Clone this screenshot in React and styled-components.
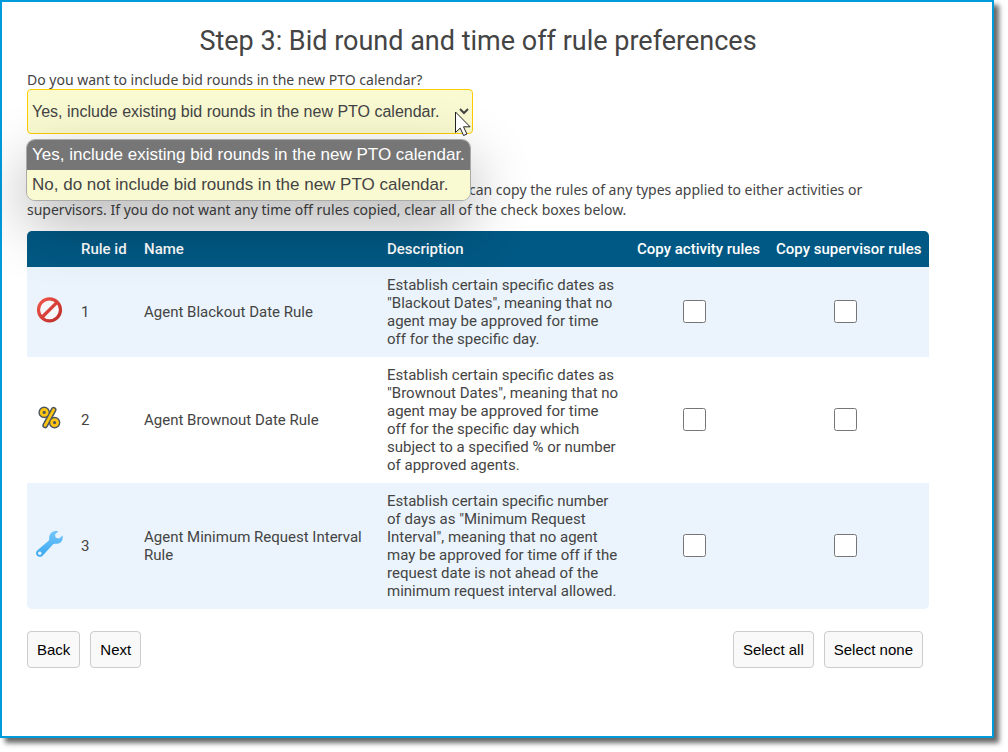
import React, { useState } from "react";
import styled, { createGlobalStyle } from "styled-components";

const GlobalStyle = createGlobalStyle`
  * {
    box-sizing: border-box;
  }

  body {
    margin: 0;
    background: #fff;
    color: #444;
    font-family: Roboto, sans-serif;
    font-size: 15px;
    line-height: 18px;
  }
`;

const Frame = styled.main`
  margin: 0 14px 14px 0;
  min-height: calc(100vh - 14px);
  padding: 21px 63px 40px 25px;
  border: 2px solid #009bdb;
  background: #fff;
  box-shadow: 5px 5px 5px 0 rgba(0, 0, 0, 0.6);
`;

const Title = styled.h1`
  margin: 0 0 11px;
  font-size: 27px;
  font-weight: 400;
  line-height: 36px;
  text-align: center;
`;

const Field = styled.div`
  position: relative;
  display: flex;
  flex-direction: column;
  align-items: flex-start;
`;

const FieldLabel = styled.label`
  font-family: "Noto Sans", sans-serif;
  font-size: 14px;
  line-height: 19px;
`;

const RoundSelect = styled.select`
  width: 446px;
  height: 45px;
  padding: 0;
  border: 1px solid #fc0;
  border-radius: 4px;
  background: #fafad2;
  color: #444;
  font-family: "Liberation Sans", sans-serif;
  font-size: 16px;
`;

const OptionList = styled.ul`
  position: absolute;
  top: 69px;
  left: -1px;
  z-index: 1;
  width: 445px;
  margin: 0;
  padding: 0;
  overflow: hidden;
  list-style: none;
  border: 1px solid #aaa;
  border-radius: 9px;
  background: #fafad2;
  box-shadow: 0 22px 60px rgba(0, 0, 0, 0.3);
`;

const OptionItem = styled.li`
  padding: 0 5px;
  font-family: "Liberation Sans", sans-serif;
  font-size: 17px;
  line-height: 30px;
  white-space: nowrap;
  background: ${(props) => (props.$active ? "#767676" : "#fafad2")};
  color: ${(props) => (props.$active ? "#fff" : "#444")};
`;

const Cursor = styled.svg`
  position: absolute;
  top: 41px;
  left: 428px;
  z-index: 2;
`;

const Hint = styled.p`
  margin: 46px 0 11px;
  font-family: "Noto Sans", sans-serif;
  font-size: 14px;
  line-height: 20px;
`;

const HintLead = styled.span`
  padding-left: 442px;
`;

const RuleTable = styled.table`
  width: 100%;
  table-layout: fixed;
  border-collapse: collapse;
  border-radius: 5px;
  overflow: hidden;
`;

const Column = styled.col`
  width: ${(props) => props.$width};
`;

const HeadCell = styled.th`
  padding: 9px;
  background: #005984;
  color: #fff;
  font-weight: 500;
  text-align: left;
  white-space: nowrap;
`;

const Row = styled.tr`
  &:nth-child(odd) {
    background: #ebf4fc;
  }
`;

const Cell = styled.td`
  padding: 9px;
`;

const IconCell = styled(Cell)`
  padding-bottom: 11px;
`;

const CheckCell = styled(Cell)`
  padding-right: 15px;
  padding-bottom: 11px;
  text-align: center;
`;

const CheckBox = styled.input`
  display: block;
  width: 23px;
  height: 23px;
  margin: 0 auto;
`;

const Icon = styled.svg`
  display: block;
  width: 28px;
  height: 28px;
`;

const Actions = styled.div`
  display: flex;
  gap: 10px;
  margin-top: 22px;
  padding-right: 6px;
`;

const Spacer = styled.div`
  flex: 1;
`;

const Button = styled.button`
  height: 37px;
  padding: 0 9px;
  border: 1px solid #ccc;
  border-radius: 4px;
  background: #f9f9f9;
  color: #000;
  font-family: "Liberation Sans", sans-serif;
  font-size: 15px;
`;

const BlackoutIcon = () => (
  <Icon viewBox="0 0 28 28" aria-hidden="true">
    <defs>
      <linearGradient id="ban" x1="0" y1="0" x2="1" y2="1">
        <stop offset="0" stopColor="#f0564a" />
        <stop offset="1" stopColor="#bd2c28" />
      </linearGradient>
    </defs>
    <circle cx="13.5" cy="12.8" r="11" fill="#f5f7f9" stroke="url(#ban)" strokeWidth="3.2" />
    <path d="M5.8 20.5 21.2 5.1" stroke="#d84039" strokeWidth="3.2" />
  </Icon>
);

const BrownoutIcon = () => (
  <Icon viewBox="0 0 28 28" fill="none" aria-hidden="true">
    <g stroke="#4b565f" strokeWidth="5.8" strokeLinecap="round">
      <circle cx="8.2" cy="7.4" r="2.9" />
      <circle cx="18.6" cy="17.6" r="2.9" />
      <path d="M17.6 4.8 9.2 20.4" />
    </g>
    <g stroke="#fdc50f" strokeWidth="2.8" strokeLinecap="round">
      <circle cx="8.2" cy="7.4" r="3" />
      <circle cx="18.6" cy="17.6" r="3" />
      <path d="M17.6 4.8 9.2 20.4" />
    </g>
  </Icon>
);

const IntervalIcon = () => (
  <Icon viewBox="0 0 28 28" aria-hidden="true">
    <defs>
      <linearGradient id="wrench" x1="0" y1="0" x2="0" y2="1">
        <stop offset="0" stopColor="#74c6fb" />
        <stop offset="1" stopColor="#3aa8f1" />
      </linearGradient>
    </defs>
    <path
      fill="url(#wrench)"
      fillRule="evenodd"
      d="M22.4.5C18.1-1.1 12.9 1.9 13.2 7.3c.1 1.2-.1 1.9-.9 2.7L1.4 19.3c-1.7 1.5-1.8 4-.3 5.5 1.6 1.5 4.2 1.3 5.7-.4l10.1-10.8c.8-.9 1.5-1 2.7-.9 5.2.5 8-3.8 6.9-8.2l-3.4 3-3.4-.8-.7-3.2ZM3.8 20.4a1.8 1.8 0 1 1 0 3.6 1.8 1.8 0 0 1 0-3.6Z"
    />
  </Icon>
);

const rules = [
  {
    id: 1,
    icon: <BlackoutIcon />,
    name: "Agent Blackout Date Rule",
    description:
      'Establish certain specific dates as "Blackout Dates", meaning that no agent may be approved for time off for the specific day.',
  },
  {
    id: 2,
    icon: <BrownoutIcon />,
    name: "Agent Brownout Date Rule",
    description:
      'Establish certain specific dates as "Brownout Dates", meaning that no agent may be approved for time off for the specific day which subject to a specified % or number of approved agents.',
  },
  {
    id: 3,
    icon: <IntervalIcon />,
    name: "Agent Minimum Request Interval Rule",
    description:
      'Establish certain specific number of days as "Minimum Request Interval", meaning that no agent may be approved for time off if the request date is not ahead of the minimum request interval allowed.',
  },
];

const options = [
  "Yes, include existing bid rounds in the new PTO calendar.",
  "No, do not include bid rounds in the new PTO calendar.",
];

const BidRounds = () => {
  const [selected, setSelected] = useState(options[0]);
  return (
    <Field>
      <FieldLabel htmlFor="bid-rounds">
        Do you want to include bid rounds in the new PTO calendar?
      </FieldLabel>
      <RoundSelect
        id="bid-rounds"
        value={selected}
        onChange={(e) => setSelected(e.target.value)}
      >
        {options.map((option) => (
          <option key={option}>{option}</option>
        ))}
      </RoundSelect>
      <OptionList role="listbox" aria-label="Bid round options">
        {options.map((option) => (
          <OptionItem
            key={option}
            role="option"
            aria-selected={option === selected}
            $active={option === selected}
            onClick={() => setSelected(option)}
          >
            {option}
          </OptionItem>
        ))}
      </OptionList>
      <Cursor width="17" height="26" viewBox="0 0 17 26" aria-hidden="true">
        <path
          d="M.5 1v20.5l4.7-4.4 3.4 7.4 3.3-1.5-3.4-7.2h6.6Z"
          fill="#fff"
          stroke="#222"
        />
      </Cursor>
    </Field>
  );
};

export default function App() {
  const [checked, setChecked] = useState({});

  const toggle = (key) => setChecked({ ...checked, [key]: !checked[key] });

  const setAll = (value) => {
    const next = {};
    rules.forEach((rule) => {
      next["activity" + rule.id] = value;
      next["supervisor" + rule.id] = value;
    });
    setChecked(next);
  };

  return (
    <>
      <GlobalStyle />
      <Frame>
        <Title>Step 3: Bid round and time off rule preferences</Title>
        <BidRounds />
        <Hint>
          <HintLead>
            can copy the rules of any types applied to either activities or
          </HintLead>{" "}
          supervisors. If you do not want any time off rules copied, clear all
          of the check boxes below.
        </Hint>
        <RuleTable>
          <colgroup>
            <Column $width="45px" />
            <Column $width="63px" />
            <Column />
            <Column $width="250px" />
            <Column $width="139px" />
            <Column $width="162px" />
          </colgroup>
          <thead>
            <tr>
              <HeadCell />
              <HeadCell>Rule id</HeadCell>
              <HeadCell>Name</HeadCell>
              <HeadCell>Description</HeadCell>
              <HeadCell>Copy activity rules</HeadCell>
              <HeadCell>Copy supervisor rules</HeadCell>
            </tr>
          </thead>
          <tbody>
            {rules.map((rule) => (
              <Row key={rule.id}>
                <IconCell>{rule.icon}</IconCell>
                <Cell>{rule.id}</Cell>
                <Cell>{rule.name}</Cell>
                <Cell>{rule.description}</Cell>
                {["activity", "supervisor"].map((type) => (
                  <CheckCell key={type}>
                    <CheckBox
                      type="checkbox"
                      aria-label={`Copy ${type} rules: ${rule.name}`}
                      checked={!!checked[type + rule.id]}
                      onChange={() => toggle(type + rule.id)}
                    />
                  </CheckCell>
                ))}
              </Row>
            ))}
          </tbody>
        </RuleTable>
        <Actions>
          <Button type="button">Back</Button>
          <Button type="button">Next</Button>
          <Spacer />
          <Button type="button" onClick={() => setAll(true)}>Select all</Button>
          <Button type="button" onClick={() => setAll(false)}>Select none</Button>
        </Actions>
      </Frame>
    </>
  );
}
